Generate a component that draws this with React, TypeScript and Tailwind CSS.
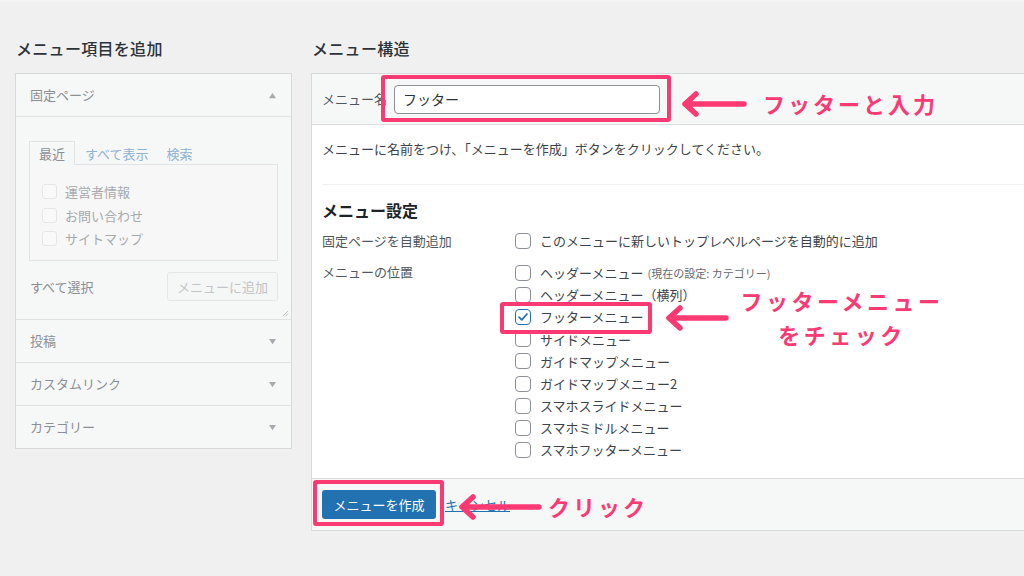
import React from "react";

const FONT = { fontFamily: '"Noto Sans CJK JP", "Noto Sans", sans-serif' };

const recentPages = ["運営者情報", "お問い合わせ", "サイトマップ"];

const locations = [
  { label: "ヘッダーメニュー", note: "(現在の設定: カテゴリー)" },
  { label: "ヘッダーメニュー（横列）" },
  { label: "フッターメニュー", checked: true },
  { label: "サイドメニュー" },
  { label: "ガイドマップメニュー" },
  { label: "ガイドマップメニュー2" },
  { label: "スマホスライドメニュー" },
  { label: "スマホミドルメニュー" },
  { label: "スマホフッターメニュー" },
];

function Checkbox({ checked = false }: { checked?: boolean }) {
  return (
    <span
      className={
        checked
          ? "flex h-[16px] w-[16px] shrink-0 items-center justify-center rounded-[4px] border border-[#2271b1] bg-white"
          : "flex h-[16px] w-[16px] shrink-0 items-center justify-center rounded-[4px] border border-[#8c8f94] bg-white"
      }
    >
      {checked && (
        <svg viewBox="0 0 16 16" className="h-[14px] w-[14px]">
          <path d="M3.5 8.2 L6.6 11.2 L12.6 4.6" fill="none" stroke="#2271b1" strokeWidth="2" strokeLinecap="round" strokeLinejoin="round" />
        </svg>
      )}
    </span>
  );
}

function FadedBox() {
  return <span className="h-[15px] w-[15px] shrink-0 rounded-[3px] border border-[#e6e6e7] bg-[#f9f9f9]" />;
}

function Caret({ up = false }: { up?: boolean }) {
  return (
    <svg viewBox="0 0 10 8" className="h-[7px] w-[9px]">
      <path d={up ? "M5 1 L9 7 L1 7 Z" : "M1 1 L9 1 L5 7 Z"} fill="#a7aaad" />
    </svg>
  );
}

function Arrow({ width }: { width: number }) {
  return (
    <svg width={width} height="28" viewBox={`0 0 ${width} 28`}>
      <path
        d={`M${width - 3} 14 L4 14 M15 4 L4 14 L15 24`}
        fill="none"
        stroke="#fb3a74"
        strokeWidth="5.5"
        strokeLinecap="round"
        strokeLinejoin="round"
      />
    </svg>
  );
}

function SidePanelRow({ title }: { title: string }) {
  return (
    <div className="flex h-[43px] items-center justify-between border-t border-[#e2e3e4] px-[14px] text-[13px] text-[#8c8f94]">
      <span>{title}</span>
      <Caret />
    </div>
  );
}

export default function App() {
  return (
    <div className="relative h-[576px] w-[1024px] overflow-hidden bg-[#f0f0f0]" style={FONT}>
      <div className="h-[2px] bg-[#f5f5f5]" />
      <div className="flex items-start gap-[19px] pl-[15px] pt-[35px]">
        {/* left column */}
        <div className="w-[277px] shrink-0">
          <h2 className="mb-[14px] pl-[1px] text-[16px] leading-[22px] font-medium tracking-[0.3px] text-[#2c3338]">メニュー項目を追加</h2>
          <div className="border border-[#d7d8d9] bg-[#f6f7f7]">
            <div className="flex h-[43px] items-center justify-between border-b border-[#e2e3e4] px-[14px] text-[13px] text-[#8c8f94]">
              <span>固定ページ</span>
              <Caret up />
            </div>
            <div className="relative px-[13px] pb-[18px] pt-[24px]">
              <div className="flex items-end text-[13px]">
                <span className="flex h-[24px] items-center border border-b-0 border-[#e2e3e4] bg-[#f6f7f7] px-[9px] text-[#8c8f94]">最近</span>
                <span className="ml-[10px] pb-[2px] text-[#8fb3d3]">すべて表示</span>
                <span className="ml-[18px] pb-[2px] text-[#8fb3d3]">検索</span>
              </div>
              <div className="-mt-px h-[97px] border border-[#e2e3e4] bg-[#f7f7f7] px-[12px] pt-[15px]">
                {recentPages.map((p) => (
                  <div key={p} className="flex h-[23.5px] items-center gap-[8px] text-[13px] text-[#a7aaad]">
                    <FadedBox />
                    <span>{p}</span>
                  </div>
                ))}
              </div>
              <div className="mt-[11px] flex items-center justify-between">
                <span className="pl-[1px] text-[13px] text-[#8c8f94]">すべて選択</span>
                <span className="flex h-[29px] w-[111px] items-center justify-center rounded-[3px] border border-[#e6e6e7] bg-[#f5f6f6] text-[13px] text-[#c3c4c7]">
                  メニューに追加
                </span>
              </div>
              <svg viewBox="0 0 8 8" className="absolute bottom-[2px] right-[2px] h-[7px] w-[7px]">
                <path d="M7 1 L1 7 M7 4 L4 7" stroke="#b5b7ba" strokeWidth="1" />
              </svg>
            </div>
            <SidePanelRow title="投稿" />
            <SidePanelRow title="カスタムリンク" />
            <SidePanelRow title="カテゴリー" />
          </div>
        </div>

        {/* right column */}
        <div className="w-[740px] shrink-0">
          <h2 className="mb-[14px] pl-[1px] text-[16px] leading-[22px] font-medium tracking-[0.3px] text-[#2c3338]">メニュー構造</h2>
          <div className="border border-[#d7d8d9] bg-white">
            <div className="flex h-[51px] items-center border-b border-[#dcdcde] bg-[#f6f7f7] pl-[10px]">
              <span className="w-[72px] text-[13px] text-[#50575e]">メニュー名</span>
              <div className="flex h-[29px] w-[266px] items-center rounded-[4px] border border-[#8c8f94] bg-white px-[8px] text-[14px] text-[#2c3338]">
                フッター
              </div>
            </div>
            <div className="px-[10px]">
              <p className="pt-[14px] text-[13px] leading-[20px] text-[#3c434a]">
                メニューに名前をつけ、「メニューを作成」ボタンをクリックしてください。
              </p>
              <div className="mt-[25px] border-t border-[#f0f0f1]" />
              <h3 className="mt-[14px] text-[16px] leading-[22px] font-bold text-[#1d2327]">メニュー設定</h3>
              <div className="mt-[10px] flex text-[13px] text-[#3c434a]">
                <span className="w-[193px] shrink-0 leading-[20px] text-[#50575e]">固定ページを自動追加</span>
                <label className="flex h-[20px] items-center gap-[9px]">
                  <Checkbox />
                  <span>このメニューに新しいトップレベルページを自動的に追加</span>
                </label>
              </div>
              <div className="mt-[11px] flex pb-[17px] text-[13px] text-[#3c434a]">
                <span className="w-[193px] shrink-0 leading-[20px] text-[#50575e]">メニューの位置</span>
                <div className="flex flex-col">
                  {locations.map((l) => (
                    <label key={l.label} className="flex h-[22.1px] items-center gap-[9px]">
                      <Checkbox checked={l.checked} />
                      <span>
                        {l.label}
                        {l.note && <span className="ml-[4px] text-[11px] text-[#646970]">{l.note}</span>}
                      </span>
                    </label>
                  ))}
                </div>
              </div>
            </div>
            <div className="flex h-[52px] items-center gap-[9px] border-t border-[#dcdcde] bg-[#f6f7f7] pl-[10px]">
              <span className="flex h-[29px] w-[114px] items-center justify-center rounded-[3px] bg-[#2271b1] text-[13px] text-white">
                メニューを作成
              </span>
              <span className="text-[13px] text-[#2271b1] underline">キャンセル</span>
            </div>
          </div>
        </div>
      </div>

      {/* annotations */}
      <div className="absolute left-[381px] top-[75px] h-[47px] w-[290px] rounded-[3px] border-[4px] border-[#fb3a74]" />
      <div className="absolute left-[681px] top-[87px] flex items-center gap-[16px]">
        <Arrow width={66} />
        <span className="text-[22px] font-bold tracking-[3px] text-[#fb3a74]">フッターと入力</span>
      </div>

      <div className="absolute left-[500px] top-[302px] h-[32px] w-[152px] rounded-[3px] border-[4px] border-[#fb3a74]" />
      <div className="absolute left-[665px] top-[304px]">
        <Arrow width={64} />
      </div>
      <div className="absolute left-[736px] top-[283px] flex w-[212px] flex-col items-center text-[22px] leading-[34px] font-bold tracking-[3.5px] text-[#fb3a74]">
        <span>フッターメニュー</span>
        <span>をチェック</span>
      </div>

      <div className="absolute left-[313px] top-[480px] h-[46px] w-[131px] rounded-[3px] border-[4px] border-[#fb3a74]" />
      <div className="absolute left-[458px] top-[490px] flex items-center gap-[6px]">
        <Arrow width={84} />
        <span className="text-[22px] font-bold tracking-[3px] text-[#fb3a74]">クリック</span>
      </div>
    </div>
  );
}
